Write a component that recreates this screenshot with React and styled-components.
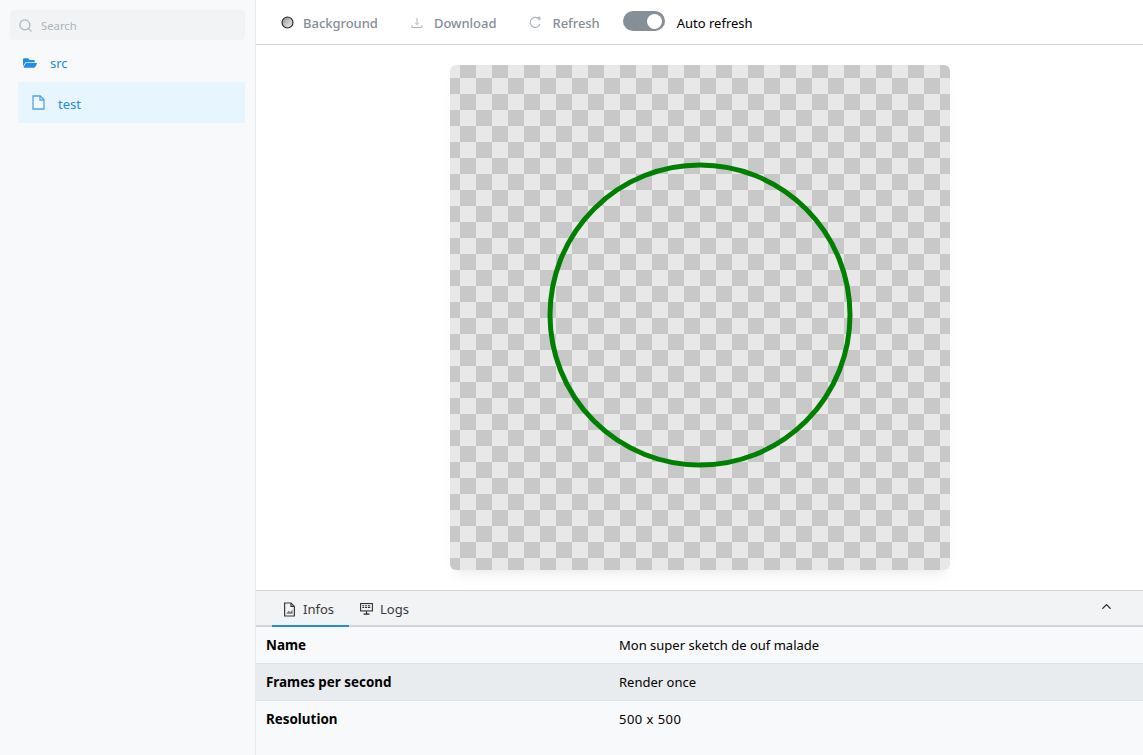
import React from "react";
import styled, { createGlobalStyle } from "styled-components";
import { FaFolderOpen } from "react-icons/fa";
import { FiSearch, FiChevronUp } from "react-icons/fi";

const GlobalStyle = createGlobalStyle`
  html, body {
    margin: 0;
    height: 100%;
    overflow: hidden;
    font-family: "Noto Sans", "Open Sans", sans-serif;
    font-size: 13px;
    color: #000;
    background: #fff;
  }
`;

const Layout = styled.div`
  display: flex;
  width: 1143px;
  height: 755px;
`;

const Sidebar = styled.aside`
  width: 256px;
  flex: none;
  box-sizing: border-box;
  background: #f8f9fa;
  border-right: 1px solid #e9ecef;
  padding: 10px 10px 0;
`;

const SearchBox = styled.div`
  display: flex;
  align-items: center;
  gap: 8px;
  height: 30px;
  padding-left: 8px;
  box-sizing: border-box;
  background: #f1f3f5;
  border-radius: 4px;
  color: #adb5bd;
  font-size: 11.3px;
  svg { font-size: 15px; }
`;

const FolderRow = styled.div`
  display: flex;
  align-items: center;
  gap: 13px;
  height: 42px;
  box-sizing: border-box;
  padding: 4px 0 0 13px;
  color: #228be6;
  font-size: 13px;
`;

const FileRow = styled.div`
  display: flex;
  align-items: center;
  gap: 13px;
  height: 41px;
  margin-left: 8px;
  padding-left: 14px;
  background: #e7f5ff;
  color: #228be6;
  font-size: 13px;
  span { margin-top: 3px; }
`;

const Main = styled.main`
  flex: 1;
  min-width: 0;
  display: flex;
  flex-direction: column;
`;

const Toolbar = styled.div`
  display: flex;
  align-items: center;
  height: 45px;
  flex: none;
  box-sizing: border-box;
  border-bottom: 1px solid #ced4da;
  padding: 1px 0 0 25px;
`;

const ToolButton = styled.div`
  display: flex;
  align-items: center;
  gap: ${(p) => p.$gap || 10}px;
  margin-right: ${(p) => p.$after || 33}px;
  color: #868e96;
  font-size: 13px;
  font-weight: 500;
  letter-spacing: -0.03px;
`;

const SwitchTrack = styled.div`
  width: 42px;
  height: 20px;
  border-radius: 10px;
  background: #868e96;
  display: flex;
  justify-content: flex-end;
  align-items: center;
  padding-right: 2.5px;
  box-sizing: border-box;
  margin: -3px 12px 0 0;
`;

const SwitchThumb = styled.div`
  width: 15px;
  height: 15px;
  border-radius: 50%;
  background: #fff;
`;

const SwitchLabel = styled.span`
  font-size: 13px;
  color: #000;
`;

const Preview = styled.div`
  flex: 1;
  min-height: 0;
  display: flex;
  justify-content: center;
  padding: 20px 0 0 1px;
  box-sizing: border-box;
`;

const Sketch = styled.div`
  width: 500px;
  height: 505px;
  border-radius: 6px;
  overflow: hidden;
  background-color: #e8e8e8;
  background-image: conic-gradient(#e8e8e8 25%, #c8c8c8 0 50%, #e8e8e8 0 75%, #c8c8c8 0);
  background-size: 32px 32px;
  background-position: 10px -3px;
  box-shadow: 0 10px 15px -5px rgba(0, 0, 0, 0.05), 0 7px 7px -5px rgba(0, 0, 0, 0.04);
  svg { display: block; }
`;

const Panel = styled.section`
  height: 165px;
  flex: none;
  background: #f8f9fa;
`;

const TabBar = styled.div`
  display: flex;
  align-items: stretch;
  height: 37px;
  box-sizing: border-box;
  background: #f1f3f5;
  border-top: 1px solid #ced4da;
  border-bottom: 2px solid #ced4da;
  padding-left: 16px;
`;

const Tab = styled.div`
  display: flex;
  align-items: center;
  gap: 7px;
  padding: 2px 15px 0 11px;
  margin-bottom: -2px;
  color: #343a40;
  font-size: 13px;
  border-bottom: 2px solid ${(p) => (p.$active ? "#228be6" : "transparent")};
`;

const CollapseButton = styled.div`
  margin-left: auto;
  margin-right: 29px;
  display: flex;
  align-items: center;
  color: #212529;
  font-size: 15px;
  padding-bottom: 4px;
`;

const InfoRow = styled.div`
  display: grid;
  grid-template-columns: 353px 1fr;
  align-items: center;
  height: 37px;
  box-sizing: border-box;
  padding-left: 10px;
  font-size: 13px;
  background: ${(p) => (p.$striped ? "#e9ecef" : "transparent")};
  border-bottom: 1px solid ${(p) => (p.$last ? "transparent" : "#dee2e6")};
`;

const InfoLabel = styled.b`
  font-weight: 700;
  font-size: 13.4px;
`;

const InfoValue = styled.span`
  letter-spacing: ${(p) => p.$spacing || 0}px;
`;

const FileIcon = () => (
  <svg width="13" height="15" viewBox="0 0 13 15" fill="#f3faff" stroke="#4da3ee" strokeWidth="1.3">
    <path d="M1 1h7.2L12 4.8V14H1z" />
    <path d="M8 1v4h4" fill="none" />
  </svg>
);

const BackgroundIcon = () => (
  <svg width="13" height="13" viewBox="0 0 14 14">
    <defs>
      <linearGradient id="bg-grad" x1="0" y1="0" x2="1" y2="1">
        <stop offset="0" stopColor="#888" />
        <stop offset="0.5" stopColor="#c4c4c4" />
        <stop offset="1" stopColor="#eee" />
      </linearGradient>
    </defs>
    <circle cx="7" cy="7" r="5.9" fill="url(#bg-grad)" stroke="#222" strokeWidth="1.2" />
  </svg>
);

const DownloadIcon = () => (
  <svg width="12" height="12" viewBox="0 0 12 12" fill="none" stroke="#adb5bd" strokeWidth="1">
    <path d="M6 1v6.5M4 5.6l2 2 2-2M1 8v2.5h10V8" />
  </svg>
);

const RefreshIcon = () => (
  <svg width="12" height="13" viewBox="0 0 12 13" fill="none" stroke="#adb5bd" strokeWidth="1.2">
    <path d="M10.6 4A5 5 0 1 0 10.9 8" />
    <path d="M8.6 1.4l2.2 0v2.8" />
  </svg>
);

const InfosIcon = () => (
  <svg width="13" height="15" viewBox="0 0 13 15" fill="none" stroke="#343a40" strokeWidth="1.2">
    <path d="M1.6 1h6.4l3.4 3.4V14H1.6z" />
    <path d="M8 1v3.4h3.4" />
    <path d="M3.2 11.8l2.6-3 1.6 1.4 2.2-2.6v4.2z" fill="#777" stroke="none" />
  </svg>
);

const LogsIcon = () => (
  <svg width="13" height="12" viewBox="0 0 14 13" fill="none" stroke="#212529">
    <rect x="0.6" y="0.6" width="12.8" height="8" strokeWidth="1.1" />
    <path d="M2.5 3h2M5.5 3h2M8.5 3h2.5M2.5 5h2M5.5 5h2M8.5 5h2.5" strokeWidth="1.1" />
    <path d="M7 9v2.5M3.8 12h6.4" strokeWidth="1.2" />
  </svg>
);

export default function App() {
  return (
    <Layout>
      <GlobalStyle />
      <Sidebar>
        <SearchBox>
          <FiSearch />
          <span>Search</span>
        </SearchBox>
        <FolderRow>
          <FaFolderOpen size={14} />
          <span>src</span>
        </FolderRow>
        <FileRow>
          <FileIcon />
          <span>test</span>
        </FileRow>
      </Sidebar>
      <Main>
        <Toolbar>
          <ToolButton $gap={9}>
            <BackgroundIcon />
            Background
          </ToolButton>
          <ToolButton $gap={11}>
            <DownloadIcon />
            Download
          </ToolButton>
          <ToolButton $gap={11} $after={23}>
            <RefreshIcon />
            Refresh
          </ToolButton>
          <SwitchTrack>
            <SwitchThumb />
          </SwitchTrack>
          <SwitchLabel>Auto refresh</SwitchLabel>
        </Toolbar>
        <Preview>
          <Sketch>
            <svg width="500" height="500" viewBox="0 0 500 500">
              <circle cx="250" cy="250" r="150" fill="none" stroke="#008000" strokeWidth="5" />
            </svg>
          </Sketch>
        </Preview>
        <Panel>
          <TabBar>
            <Tab $active>
              <InfosIcon />
              Infos
            </Tab>
            <Tab>
              <LogsIcon />
              Logs
            </Tab>
            <CollapseButton>
              <FiChevronUp />
            </CollapseButton>
          </TabBar>
          <InfoRow>
            <InfoLabel>Name</InfoLabel>
            <InfoValue>Mon super sketch de ouf malade</InfoValue>
          </InfoRow>
          <InfoRow $striped>
            <InfoLabel>Frames per second</InfoLabel>
            <InfoValue>Render once</InfoValue>
          </InfoRow>
          <InfoRow $last>
            <InfoLabel>Resolution</InfoLabel>
            <InfoValue $spacing={0.45}>500 x 500</InfoValue>
          </InfoRow>
        </Panel>
      </Main>
    </Layout>
  );
}
